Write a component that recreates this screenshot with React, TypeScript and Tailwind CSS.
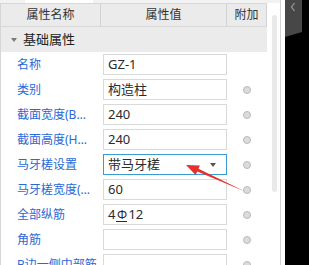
import React from "react";

const font = { fontFamily: '"Noto Sans", "Noto Sans CJK SC", sans-serif' };

type Row = { label: string; value: string; circle: boolean; dropdown?: boolean; rebar?: boolean; full?: boolean };

const rows: Row[] = [
  { label: "名称", value: "GZ-1", circle: false },
  { label: "类别", value: "构造柱", circle: true },
  { label: "截面宽度(B边)(mm)", value: "240", circle: true },
  { label: "截面高度(H边)(mm)", value: "240", circle: true },
  { label: "马牙槎设置", value: "带马牙槎", circle: true, dropdown: true },
  { label: "马牙槎宽度(mm)", value: "60", circle: true },
  { label: "全部纵筋", value: "4", circle: true, rebar: true },
  { label: "角筋", value: "", circle: true },
  { label: "B边一侧中部筋", value: "", circle: true, full: true },
];

function Circle() {
  return <div className="w-[8px] h-[8px] rounded-full bg-[#dcdcde] border border-[#b9b9bd]" />;
}

export default function App() {
  return (
    <div className="w-[309px] h-[265px] bg-black flex overflow-hidden relative" style={font}>
      <div className="w-[281px] h-full bg-white border-r border-[#d3d3d3] flex flex-col">
        <div className="h-[5px] bg-[#f2f2f2] flex">
          <div className="ml-[25px] w-[68px] h-[3px] bg-white" />
        </div>
        <div className="flex flex-1 border-l border-[#d6d6d6]">
          <div className="w-[266px] flex flex-col">
            <div className="h-[24px] flex bg-[#ebebeb] border-t border-b border-[#d8d8d8] text-[12px] text-[#333]">
              <div className="w-[100px] border-r border-[#d2d2d2] flex items-center justify-center">属性名称</div>
              <div className="w-[126px] border-r border-[#d2d2d2] flex items-center justify-center">属性值</div>
              <div className="w-[40px] border-r border-[#d2d2d2] flex items-center justify-center">附加</div>
            </div>
            <div className="h-[25px] bg-[#ebebeb] flex items-center pl-[10px] text-[13px] text-[#222]">
              <svg width="6" height="4" viewBox="0 0 6 4" className="mr-[6px]">
                <polygon points="0,0 6,0 3,4" fill="#7a7a7a" />
              </svg>
              基础属性
            </div>
            {rows.map((r, i) => (
              <div key={i} className="h-[25px] flex items-center shrink-0">
                <div
                  className={
                    "w-[100px] pl-[16px] text-[12px] text-[#2a68d6] whitespace-nowrap " +
                    (r.full ? "pr-0 overflow-visible relative z-10" : "pr-[10px] overflow-hidden text-ellipsis")
                  }
                >
                  {r.label}
                </div>
                <div className="w-[126px] pl-[2px]">
                  <div
                    className={
                      "w-[124px] h-[21px] border flex items-center pl-[4px] pr-[10px] text-[13px] text-[#2b2b2b] bg-white " +
                      (r.dropdown ? "border-[#3a9bd4]" : "border-[#d9d9d9]")
                    }
                  >
                    <span className="flex-1 whitespace-nowrap">
                      {r.value}
                      {r.rebar && (
                        <>
                          <span className="inline-block w-[11px] text-center text-[12px] border-b border-[#2b2b2b] leading-[12px] mx-[1px]">Φ</span>
                          12
                        </>
                      )}
                    </span>
                    {r.dropdown && (
                      <svg width="6" height="4" viewBox="0 0 6 4">
                        <polygon points="0,0 6,0 3,4" fill="#555" />
                      </svg>
                    )}
                  </div>
                </div>
                <div className="w-[40px] flex justify-center">{r.circle && <Circle />}</div>
              </div>
            ))}
          </div>
          <div className="w-[13px] pt-[12px] pl-[5px]">
            <div className="w-[5px] h-[177px] rounded-full bg-[#e9e9e9]" />
          </div>
        </div>
      </div>
      <div className="w-[4px] h-full bg-white" />
      <div className="w-[17px]">
        <svg width="17" height="38" viewBox="0 0 17 38">
          <polygon points="0,0 17,0 17,32 0,37" fill="#474747" />
          <polyline points="9.5,3 6.5,7 9.5,11" fill="none" stroke="#9c9c9c" strokeWidth="1.2" />
        </svg>
      </div>
      <svg className="absolute left-0 top-0 pointer-events-none" width="309" height="265" viewBox="0 0 309 265">
        <polygon
          points="186,165 199.9,165.4 198.5,168.8 245,191.4 197.3,171.6 195.6,175"
          fill="#e8302a"
        />
      </svg>
    </div>
  );
}
